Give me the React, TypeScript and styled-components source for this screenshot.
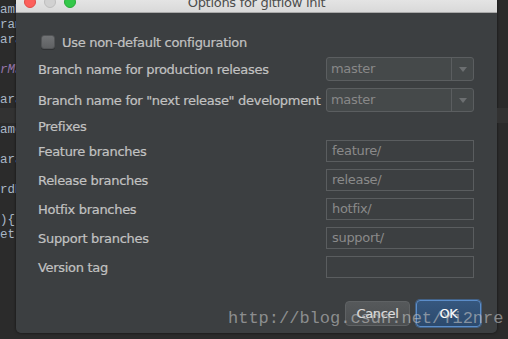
import React from "react";
import styled, { createGlobalStyle } from "styled-components";

const GlobalStyle = createGlobalStyle`
  html, body { margin: 0; padding: 0; background: #2b2b2b; overflow: hidden; }
  #root { width: 508px; height: 339px; }
`;

const Screen = styled.div`
  position: relative;
  display: flex;
  width: 508px;
  height: 339px;
  overflow: hidden;
  background: #2b2b2b;
`;

const EditorStrip = styled.div<{ $w: number }>`
  width: ${(p) => p.$w}px;
  flex-shrink: 0;
  overflow: hidden;
  padding-top: 3px;
  font-family: "Liberation Mono", "DejaVu Sans Mono", monospace;
  font-size: 12.5px;
  color: #a9b7c6;
`;

const CodeLine = styled.div<{ $current?: boolean; $field?: boolean }>`
  height: 15px;
  line-height: 15px;
  white-space: nowrap;
  background: ${(p) => (p.$current ? "#323232" : "transparent")};
  color: ${(p) => (p.$field ? "#9876aa" : "#a9b7c6")};
  font-style: ${(p) => (p.$field ? "italic" : "normal")};
`;

const Window = styled.div`
  width: 481px;
  flex-shrink: 0;
  margin-top: -10px;
  height: 343px;
  display: flex;
  flex-direction: column;
  border-radius: 0 0 5px 5px;
  overflow: hidden;
  box-shadow: 0 0 3px rgba(0, 0, 0, 0.6);
  font-family: "DejaVu Sans", "Liberation Sans", sans-serif;
  font-size: 13px;
  letter-spacing: -0.3px;
`;

const TitleBar = styled.div`
  height: 22px;
  flex-shrink: 0;
  display: grid;
  grid-template-columns: 1fr auto 1fr;
  align-items: center;
  background: linear-gradient(#ededed, #d9d9d9);
  border-bottom: 1px solid #a9a9a9;
`;

const Lights = styled.div`
  display: flex;
  gap: 8px;
  padding-left: 8px;
`;

const Light = styled.span<{ $c: string; $b: string }>`
  width: 12px;
  height: 12px;
  box-sizing: border-box;
  border-radius: 50%;
  background: ${(p) => p.$c};
  border: 1px solid ${(p) => p.$b};
`;

const Title = styled.div`
  color: #4d4d4d;
  line-height: 22px;
  padding-top: 2px;
`;

const Body = styled.div`
  flex: 1;
  background: #3c3f41;
  padding: 22px 16px 6px 22px;
  display: flex;
  flex-direction: column;
  color: #c2c2c2;
  -webkit-text-stroke: 0.2px currentColor;
`;

const CheckRow = styled.div`
  height: 14px;
  display: flex;
  align-items: center;
  gap: 7px;
  padding-left: 3px;
`;

const CheckBox = styled.span`
  width: 14px;
  height: 14px;
  box-sizing: border-box;
  border-radius: 3px;
  background: linear-gradient(#717375, #5f6163);
  border: 1px solid #525456;
  box-shadow: 0 1px 0 #2f3133;
`;

const Form = styled.div`
  margin-top: 8px;
  display: grid;
  grid-template-columns: 1fr 148px;
  grid-template-rows: 24px 24px 14px repeat(5, 22px);
  row-gap: 7px;
  align-items: center;
  padding-right: 7px;
`;

const Label = styled.div<{ $span?: boolean }>`
  white-space: nowrap;
  grid-column: ${(p) => (p.$span ? "1 / span 2" : "auto")};
`;

const Combo = styled.div`
  height: 24px;
  box-sizing: border-box;
  display: flex;
  border: 1px solid #5b5e60;
  border-radius: 3px;
  background: #45494a;
  color: #888888;
  -webkit-text-stroke: 0;
`;

const ComboText = styled.div`
  flex: 1;
  padding-left: 4px;
  line-height: 22px;
`;

const ComboArrow = styled.div`
  width: 21px;
  border-left: 1px solid #5b5e60;
  display: flex;
  align-items: center;
  justify-content: center;
  &::after {
    content: "";
    border-left: 4px solid transparent;
    border-right: 4px solid transparent;
    border-top: 5px solid #6c6f71;
  }
`;

const Field = styled.div`
  height: 22px;
  box-sizing: border-box;
  border: 1px solid #5a5d5f;
  background: #3c3f41;
  color: #8a8a8a;
  padding-left: 5px;
  line-height: 20px;
  -webkit-text-stroke: 0;
`;

const Buttons = styled.div`
  margin-top: auto;
  height: 27px;
  display: flex;
  justify-content: flex-end;
  align-items: center;
  gap: 6px;
`;

const Button = styled.div<{ $primary?: boolean }>`
  width: 65px;
  height: ${(p) => (p.$primary ? 27 : 25)}px;
  box-sizing: border-box;
  display: flex;
  align-items: center;
  justify-content: center;
  border-radius: 4px;
  color: ${(p) => (p.$primary ? "#ffffff" : "#dddddd")};
  background: ${(p) =>
    p.$primary
      ? "linear-gradient(#36577e, #2c4a6d)"
      : "linear-gradient(#56595b, #4b4e50)"};
  border: 1px solid ${(p) => (p.$primary ? "#5b8dc9" : "#5f6264")};
  box-shadow: ${(p) =>
    p.$primary ? "0 0 0 1px rgba(70, 120, 180, 0.6)" : "none"};
`;

const Watermark = styled.div`
  position: absolute;
  left: 228px;
  top: 309px;
  font-family: "Liberation Mono", "DejaVu Sans Mono", monospace;
  font-size: 17px;
  line-height: 20px;
  color: rgba(195, 195, 195, 0.6);
  white-space: nowrap;
  pointer-events: none;
`;

const leftLines: { t: string; field?: boolean }[] = [
  { t: "amMap" },
  { t: "ramet" },
  { t: "arams" },
  { t: "" },
  { t: "rMap", field: true },
  { t: "" },
  { t: "arams" },
  { t: "" },
  { t: "ameV" },
  { t: "" },
  { t: "arams" },
  { t: "" },
  { t: "rdMa" },
  { t: "" },
  { t: "){" },
  { t: "et(" },
];

const Editor: React.FC<{ w: number; text: boolean }> = ({ w, text }) => (
  <EditorStrip $w={w}>
    {leftLines.map((l, i) => (
      <CodeLine key={i} $current={i === 7} $field={l.field}>
        {text ? l.t || "\u00a0" : "\u00a0"}
      </CodeLine>
    ))}
  </EditorStrip>
);

const prefixes = [
  { label: "Feature branches", value: "feature/" },
  { label: "Release branches", value: "release/" },
  { label: "Hotfix branches", value: "hotfix/" },
  { label: "Support branches", value: "support/" },
  { label: "Version tag", value: "" },
];

export default function App() {
  return (
    <>
      <GlobalStyle />
      <Screen>
        <Editor w={16} text />
        <Window>
          <TitleBar>
            <Lights>
              <Light $c="#fc605c" $b="#de4b46" />
              <Light $c="#d1d1d1" $b="#bdbdbd" />
              <Light $c="#34c84a" $b="#28a937" />
            </Lights>
            <Title>Options for gitflow init</Title>
            <div />
          </TitleBar>
          <Body>
            <CheckRow>
              <CheckBox />
              <span>Use non-default configuration</span>
            </CheckRow>
            <Form>
              <Label>Branch name for production releases</Label>
              <Combo>
                <ComboText>master</ComboText>
                <ComboArrow />
              </Combo>
              <Label>Branch name for "next release" development</Label>
              <Combo>
                <ComboText>master</ComboText>
                <ComboArrow />
              </Combo>
              <Label $span>Prefixes</Label>
              {prefixes.map((p) => (
                <React.Fragment key={p.label}>
                  <Label>{p.label}</Label>
                  <Field>{p.value}</Field>
                </React.Fragment>
              ))}
            </Form>
            <Buttons>
              <Button>Cancel</Button>
              <Button $primary>OK</Button>
            </Buttons>
          </Body>
        </Window>
        <Editor w={11} text={false} />
        <Watermark>http://blog.csdn.net/Yi2nre</Watermark>
      </Screen>
    </>
  );
}
